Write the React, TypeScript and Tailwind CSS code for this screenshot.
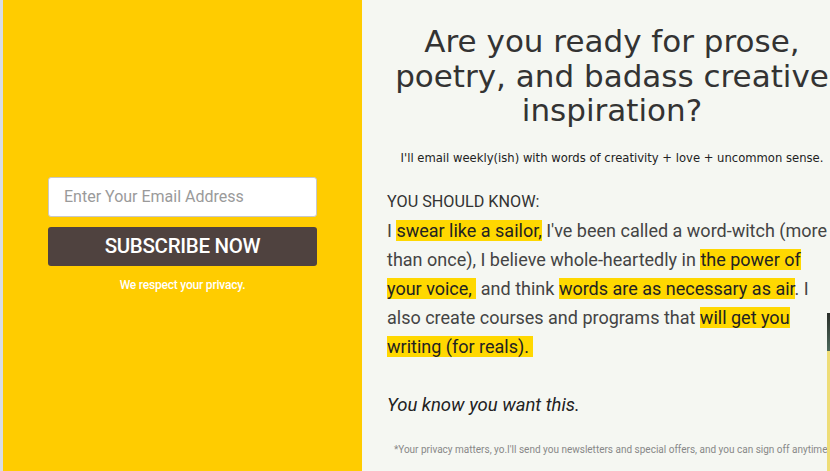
import React from "react";

const hl = "bg-[#ffd800] text-[#222]";

export default function App() {
  return (
    <div className="w-[830px] h-[471px] overflow-hidden relative bg-[#f5f7f2]">
      <div className="flex w-[862px] h-[471px]">
        <div className="w-[3px] bg-[#d9dde6] shrink-0" />
        <div className="w-[359px] shrink-0 bg-[#ffcc00] flex flex-col items-center justify-center" style={{ fontFamily: "Roboto, sans-serif" }}>
          <div className="w-[269px] flex flex-col">
            <div className="h-[40px] bg-white border border-[#c8c8c8] rounded-[3px] flex items-center pl-[15px] text-[16px] text-[#9a9a9a]">
              Enter Your Email Address
            </div>
            <div className="mt-[10px] h-[39px] bg-[#4f423f] rounded-[3px] flex items-center justify-center text-white text-[20.5px] font-medium tracking-[-0.3px]">
              SUBSCRIBE NOW
            </div>
            <div className="mt-[10px] text-center text-white text-[12px] font-medium tracking-[-0.2px]">
              We respect your privacy.
            </div>
          </div>
        </div>
        <div className="w-[500px] shrink-0 px-[25px] pt-[24px] text-[#333]">
          <h1 className="text-center text-[31px] leading-[34.5px] text-[#333]" style={{ fontFamily: "'DejaVu Sans', sans-serif", fontWeight: 400 }}>
            Are you ready for prose, poetry, and badass creative inspiration?
          </h1>
          <p className="mt-[22px] text-center text-[11.6px] text-[#222]" style={{ fontFamily: "'DejaVu Sans', sans-serif" }}>
            I'll email weekly(ish) with words of creativity + love + uncommon sense.
          </p>
          <div className="mt-[19px]" style={{ fontFamily: "Roboto, sans-serif" }}>
            <p className="text-[18px] leading-[29px] text-[#444]">
              <span className="text-[16.2px] text-[#333]">YOU SHOULD KNOW:</span>
              <br />
              I <span className={hl}>swear like a sailor,</span> I've been called a word-witch (more than once), I believe whole-heartedly in{" "}
              <span className={hl}>the power of your voice,&nbsp;</span> and think{" "}
              <span className={hl}>words are as necessary as air</span>. I also create courses and programs that{" "}
              <span className={hl}>will get you writing (for reals).&nbsp;</span>
            </p>
            <p className="mt-[30px] text-[18.5px] leading-[29px] italic text-[#222]">You know you want this.</p>
            <p className="mt-[23px] text-center whitespace-nowrap text-[10px] leading-[13px] text-[#888] -mx-[10px]">
              *Your privacy matters, yo.I'll send you newsletters and special offers, and you can sign off anytime.
            </p>
          </div>
        </div>
      </div>
      <div className="absolute right-0 top-[313px] w-[3px] h-[38px] bg-gradient-to-b from-[#2a2f2a] to-[#4d6a5c]" />
      <div className="absolute right-0 top-[351px] w-[3px] h-[120px] bg-[#eedd77]" />
    </div>
  );
}
